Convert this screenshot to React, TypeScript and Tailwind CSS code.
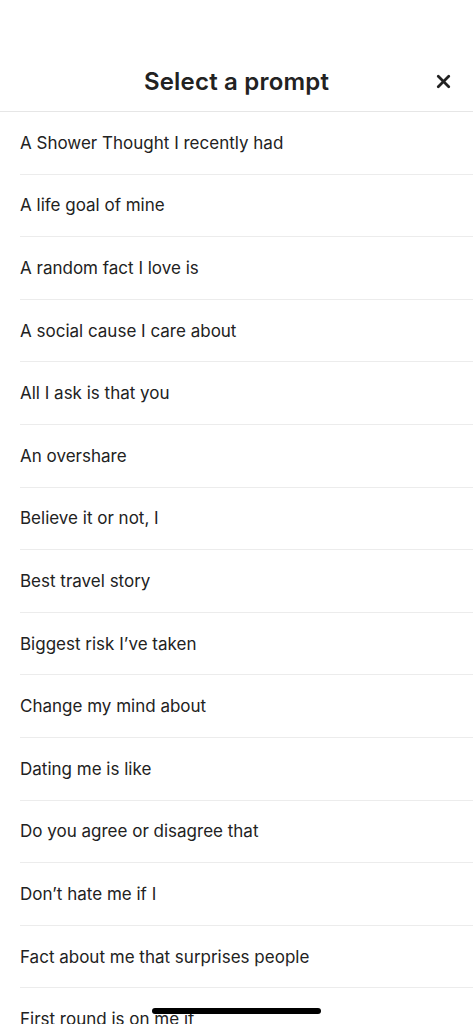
import { X } from "lucide-react";

const prompts = [
  "A Shower Thought I recently had",
  "A life goal of mine",
  "A random fact I love is",
  "A social cause I care about",
  "All I ask is that you",
  "An overshare",
  "Believe it or not, I",
  "Best travel story",
  "Biggest risk I’ve taken",
  "Change my mind about",
  "Dating me is like",
  "Do you agree or disagree that",
  "Don’t hate me if I",
  "Fact about me that surprises people",
  "First round is on me if",
  "Green flags I look for",
];

export default function App() {
  return (
    <div className="relative h-[1024px] w-full overflow-hidden bg-white font-['Inter',sans-serif] text-[#222]">
      <header className="relative flex h-[112px] items-end justify-center border-b border-[#e6e6e6] pb-[14px]">
        <h1 className="text-[24px] font-semibold leading-[30px] tracking-[0.2px]">
          Select a prompt
        </h1>
        <button className="absolute right-[19px] bottom-[19px] text-[#222]">
          <X className="h-[21px] w-[21px]" strokeWidth={3.2} />
        </button>
      </header>

      <ul className="pl-[20px]">
        {prompts.map((prompt) => (
          <li
            key={prompt}
            className="flex h-[62.6px] items-center border-b border-[#ececec] pt-[1px] text-[17px] leading-none"
          >
            {prompt}
          </li>
        ))}
      </ul>

      <div className="absolute bottom-[10px] left-[152px] h-[6px] w-[169px] rounded-full bg-black" />
    </div>
  );
}
